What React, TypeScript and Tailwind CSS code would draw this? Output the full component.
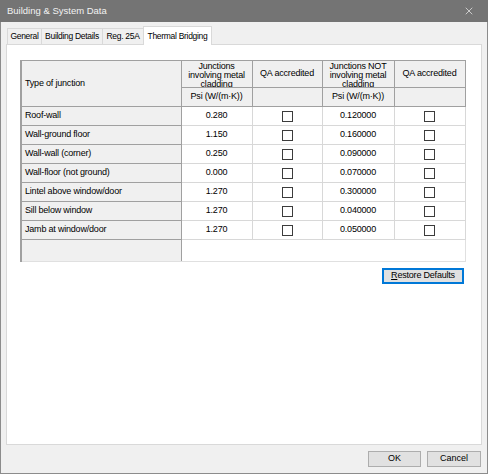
import { X } from "lucide-react";

type Row = { name: string; metal: string; notMetal: string };

const ROWS: Row[] = [
  { name: "Roof-wall", metal: "0.280", notMetal: "0.120000" },
  { name: "Wall-ground floor", metal: "1.150", notMetal: "0.160000" },
  { name: "Wall-wall (corner)", metal: "0.250", notMetal: "0.090000" },
  { name: "Wall-floor (not ground)", metal: "0.000", notMetal: "0.070000" },
  { name: "Lintel above window/door", metal: "1.270", notMetal: "0.300000" },
  { name: "Sill below window", metal: "1.270", notMetal: "0.040000" },
  { name: "Jamb at window/door", metal: "1.270", notMetal: "0.050000" },
];

const TABS = [
  { label: "General", w: "w-[35px]" },
  { label: "Building Details", w: "w-[62px]" },
  { label: "Reg. 25A", w: "w-[42px]" },
];

const UI_FONT = "font-['Liberation_Sans',Arial,sans-serif]";

function Checkbox() {
  return <div className="mx-auto h-[11px] w-[11px] border border-[#3c3c3c] bg-white" />;
}

const HEAD_CELL = "border border-[#a0a0a0] bg-[#f0f0f0] p-0 font-normal";
const BODY_CELL = "border border-[#d8d8d8] bg-white p-0 text-center";

export default function App() {
  return (
    <div className={`flex h-[474px] w-[488px] flex-col text-[#000] ${UI_FONT}`}>
      {/* title bar */}
      <div className="flex h-[22px] shrink-0 items-center justify-between bg-[#747474] pl-[7px] pr-[13px]">
        <span className="whitespace-nowrap text-[9.5px] text-[#f2f2f2]">Building &amp; System Data</span>
        <X className="h-[12px] w-[12px] text-[#e8e8e8]" strokeWidth={1.5} />
      </div>

      <div className="flex flex-1 flex-col border-x border-b border-[#8c8c8c] bg-[#f0f0f0] px-[5px]">
        {/* tabs */}
        <div className="mt-[4px] flex h-[18px] items-end pl-[1px]">
          {TABS.map((t) => (
            <div
              key={t.label}
              className={`-mr-px flex h-[16px] items-center justify-center whitespace-nowrap border border-b-0 border-[#d9d9d9] bg-[#f0f0f0] text-[8.5px] tracking-[-0.3px] ${t.w}`}
            >
              {t.label}
            </div>
          ))}
          <div className="relative z-10 -mb-px flex h-[19px] w-[69px] items-start justify-center whitespace-nowrap border border-b-0 border-[#d9d9d9] bg-white pt-[3px] text-[8.5px] tracking-[-0.3px]">
            Thermal Bridging
          </div>
        </div>

        {/* tab panel */}
        <div className="flex h-[401px] flex-col border border-[#d9d9d9] bg-white pl-[13px] pr-[15px] pt-[15px]">
          <table className="w-[444px] table-fixed border-collapse text-[9px] tracking-[-0.2px]">
            <colgroup>
              <col className="w-[160px]" />
              <col className="w-[71px]" />
              <col className="w-[70px]" />
              <col className="w-[72px]" />
              <col className="w-[71px]" />
            </colgroup>
            <thead>
              <tr className="h-[27px]">
                <th rowSpan={2} className={`${HEAD_CELL} border-l-2 pl-[3px] text-left`}>
                  Type of junction
                </th>
                <th className={HEAD_CELL}>
                  <div className="h-[26px] overflow-hidden px-[2px] pt-[1px] text-center leading-[9px]">
                    Junctions involving metal cladding
                  </div>
                </th>
                <th className={`${HEAD_CELL} whitespace-nowrap text-center`}>QA accredited</th>
                <th className={HEAD_CELL}>
                  <div className="h-[26px] overflow-hidden px-[2px] pt-[1px] text-center leading-[9px]">
                    Junctions NOT involving metal cladding
                  </div>
                </th>
                <th className={`${HEAD_CELL} whitespace-nowrap text-center`}>QA accredited</th>
              </tr>
              <tr className="h-[19px]">
                <th className={`${HEAD_CELL} whitespace-nowrap text-center`}>Psi (W/(m·K))</th>
                <th className={HEAD_CELL} />
                <th className={`${HEAD_CELL} whitespace-nowrap text-center`}>Psi (W/(m·K))</th>
                <th className={HEAD_CELL} />
              </tr>
            </thead>
            <tbody>
              {ROWS.map((r) => (
                <tr key={r.name} className="h-[19px]">
                  <td className="whitespace-nowrap border border-l-2 border-[#a0a0a0] bg-[#f0f0f0] p-0 pl-[3px]">
                    {r.name}
                  </td>
                  <td className={BODY_CELL}>{r.metal}</td>
                  <td className={BODY_CELL}>
                    <Checkbox />
                  </td>
                  <td className={BODY_CELL}>{r.notMetal}</td>
                  <td className={BODY_CELL}>
                    <Checkbox />
                  </td>
                </tr>
              ))}
              <tr className="h-[22px]">
                <td className="border border-l-2 border-[#a0a0a0] border-b-[#e0e0e0] bg-[#f0f0f0] p-0" />
                <td colSpan={4} className="border-b border-r border-[#e0e0e0] bg-white p-0" />
              </tr>
            </tbody>
          </table>

          <div className="mt-[6px] flex w-[446px] justify-end pr-[2px]">
            <button className="flex h-[16px] w-[82px] items-center justify-center whitespace-nowrap border border-[#0078d7] bg-[#e1e1e1] text-[9px] tracking-[-0.2px] shadow-[inset_0_0_0_1px_#0078d7]">
              <span>
                <span className="underline">R</span>estore Defaults
              </span>
            </button>
          </div>
        </div>

        {/* footer buttons */}
        <div className="flex flex-1 items-center justify-end gap-[6px] pb-[1px] pr-[1px]">
          <button className="flex h-[16px] w-[53px] items-center justify-center border border-[#adadad] bg-[#e1e1e1] text-[9px]">
            OK
          </button>
          <button className="flex h-[16px] w-[54px] items-center justify-center border border-[#adadad] bg-[#e1e1e1] text-[9px]">
            Cancel
          </button>
        </div>
      </div>
    </div>
  );
}
